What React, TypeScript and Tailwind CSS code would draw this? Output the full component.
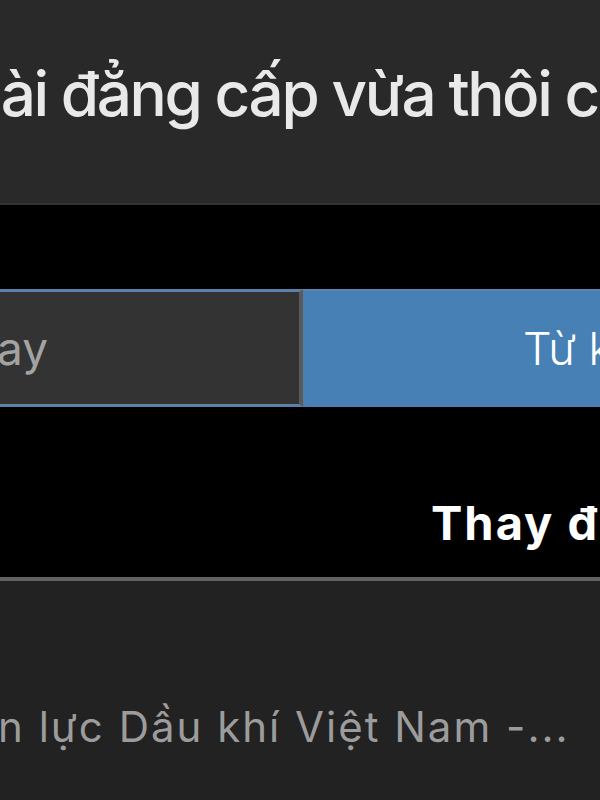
import React from "react";

const font = "font-['Inter','Roboto','Liberation_Sans',sans-serif]";

export default function App() {
  return (
    <div className={`flex h-[800px] w-[600px] flex-col overflow-hidden ${font}`}>
      {/* title strip */}
      <div className="h-[205px] shrink-0 overflow-hidden whitespace-nowrap border-b-2 border-[#333333] bg-[#292929]">
        <p className="ml-[-35px] mt-[56px] text-[62px] leading-[76px] font-medium tracking-[-2.4px] text-[#e9e9e9]">
          oài đẳng cấp vừa thôi chứ
        </p>
      </div>

      {/* black panel */}
      <div className="flex h-[372px] shrink-0 flex-col bg-black">
        <div className="mt-[84px] flex h-[118px]">
          <div className="flex w-[303px] items-center overflow-hidden border-y-[3px] border-r-[4px] border-y-[#5a80ad] border-r-[#5a5a5a] bg-[#333333]">
            <span className="ml-[-3px] text-[46px] font-normal text-[#a3a3a3]">ay</span>
          </div>
          <div className="flex flex-1 items-center overflow-hidden whitespace-nowrap border-t-[2px] border-[#5a86b6] bg-[#4680b5] pl-[220px]">
            <span className="text-[45px] font-light text-white">Từ khóa</span>
          </div>
        </div>
        <div className="mt-[88px] overflow-hidden whitespace-nowrap pl-[431px]">
          <span className="text-[47px] font-bold leading-[56px] tracking-[2px] text-white">Thay đổi</span>
        </div>
      </div>

      <div className="h-[4px] shrink-0 bg-[#616161]" />

      {/* list row */}
      <div className="flex-1 overflow-hidden whitespace-nowrap bg-[#222222]">
        <p className="ml-[-2px] mt-[120px] text-[42px] leading-[52px] tracking-[2px] text-[#9c9c9c]">
          n lực Dầu khí Việt Nam -...
        </p>
      </div>
    </div>
  );
}
